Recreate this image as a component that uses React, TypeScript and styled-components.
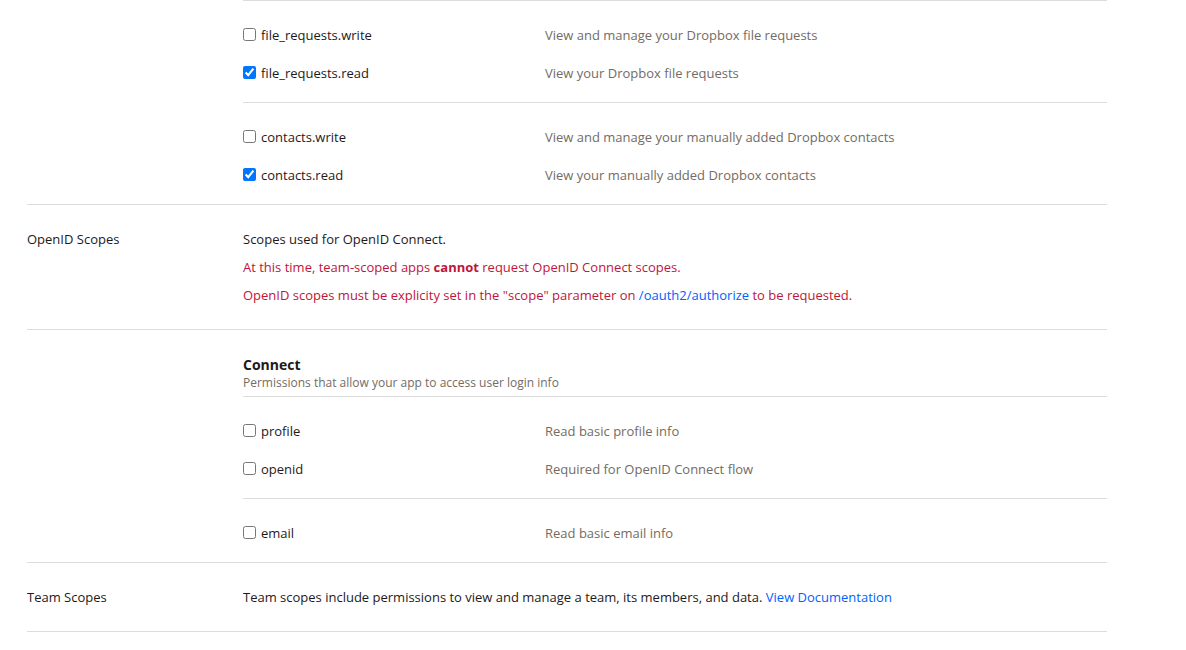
import React from 'react';
import styled, { createGlobalStyle } from 'styled-components';

const GlobalStyle = createGlobalStyle`
  html, body {
    margin: 0;
    padding: 0;
    background: #fff;
  }
  body {
    font-family: "Open Sans", "Noto Sans", sans-serif;
    font-size: 13px;
    color: #1e1919;
  }
`;

const Page = styled.div`
  width: 1080px;
  padding-left: 27px;
`;

const Section = styled.div`
  display: grid;
  grid-template-columns: 216px 1fr;
  border-bottom: 1px solid #dcdcdc;
`;

const SectionLabel = styled.div<{ $top?: number }>`
  padding-top: ${p => p.$top ?? 0}px;
  line-height: 28px;
`;

const SectionBody = styled.div``;

const Group = styled.div<{ $border?: boolean }>`
  padding: 15px 0 10px;
  border-bottom: ${p => (p.$border ? '1px solid #dcdcdc' : 'none')};
`;

const TopRule = styled.div`
  border-top: 1px solid #dcdcdc;
`;

const Row = styled.label`
  display: grid;
  grid-template-columns: 302px 1fr;
  align-items: center;
  height: 38px;
`;

const ScopeName = styled.span`
  display: flex;
  align-items: center;
`;

const Check = styled.input`
  width: 13px;
  height: 13px;
  margin: 0 5px 0 0;
  position: relative;
  top: -1px;
`;

const ScopeDesc = styled.span`
  color: #736c64;
`;

const Notes = styled.div`
  padding: 20px 0 20px;
`;

const NoteLine = styled.div<{ $error?: boolean }>`
  line-height: 28px;
  color: ${p => (p.$error ? '#bf1539' : '#1e1919')};

  b {
    font-weight: 700;
  }
`;

const Link = styled.a`
  color: #0061fe;
  text-decoration: none;
`;

const GroupHeader = styled.div`
  padding: 25px 0 5px;
  border-bottom: 1px solid #dcdcdc;
`;

const GroupTitle = styled.div`
  font-size: 14px;
  font-weight: 700;
  line-height: 20px;
`;

const GroupSubtitle = styled.div`
  font-size: 12px;
  line-height: 16px;
  color: #736c64;
`;

const TeamText = styled.div`
  padding: 24px 0 24px;
  line-height: 20px;
`;

type Scope = { name: string; desc: string; checked?: boolean };

const ScopeRow = ({ name, desc, checked }: Scope) => (
  <Row>
    <ScopeName>
      <Check type="checkbox" defaultChecked={checked} />
      {name}
    </ScopeName>
    <ScopeDesc>{desc}</ScopeDesc>
  </Row>
);

const fileRequests: Scope[] = [
  { name: 'file_requests.write', desc: 'View and manage your Dropbox file requests' },
  { name: 'file_requests.read', desc: 'View your Dropbox file requests', checked: true },
];

const contacts: Scope[] = [
  { name: 'contacts.write', desc: 'View and manage your manually added Dropbox contacts' },
  { name: 'contacts.read', desc: 'View your manually added Dropbox contacts', checked: true },
];

const connect: Scope[] = [
  { name: 'profile', desc: 'Read basic profile info' },
  { name: 'openid', desc: 'Required for OpenID Connect flow' },
];

export default function App() {
  return (
    <>
      <GlobalStyle />
      <Page>
        <Section>
          <SectionLabel />
          <SectionBody>
            <TopRule />
            <Group $border>
              {fileRequests.map(s => <ScopeRow key={s.name} {...s} />)}
            </Group>
            <Group>
              {contacts.map(s => <ScopeRow key={s.name} {...s} />)}
            </Group>
          </SectionBody>
        </Section>

        <Section>
          <SectionLabel $top={20}>OpenID Scopes</SectionLabel>
          <Notes>
            <NoteLine>Scopes used for OpenID Connect.</NoteLine>
            <NoteLine $error>
              At this time, team-scoped apps <b>cannot</b> request OpenID Connect scopes.
            </NoteLine>
            <NoteLine $error>
              OpenID scopes must be explicity set in the "scope" parameter on{' '}
              <Link href="#">/oauth2/authorize</Link> to be requested.
            </NoteLine>
          </Notes>
        </Section>

        <Section>
          <SectionLabel />
          <SectionBody>
            <GroupHeader>
              <GroupTitle>Connect</GroupTitle>
              <GroupSubtitle>Permissions that allow your app to access user login info</GroupSubtitle>
            </GroupHeader>
            <Group $border>
              {connect.map(s => <ScopeRow key={s.name} {...s} />)}
            </Group>
            <Group>
              <ScopeRow name="email" desc="Read basic email info" />
            </Group>
          </SectionBody>
        </Section>

        <Section>
          <SectionLabel $top={20}>Team Scopes</SectionLabel>
          <TeamText>
            Team scopes include permissions to view and manage a team, its members, and data.{' '}
            <Link href="#">View Documentation</Link>
          </TeamText>
        </Section>
      </Page>
    </>
  );
}
